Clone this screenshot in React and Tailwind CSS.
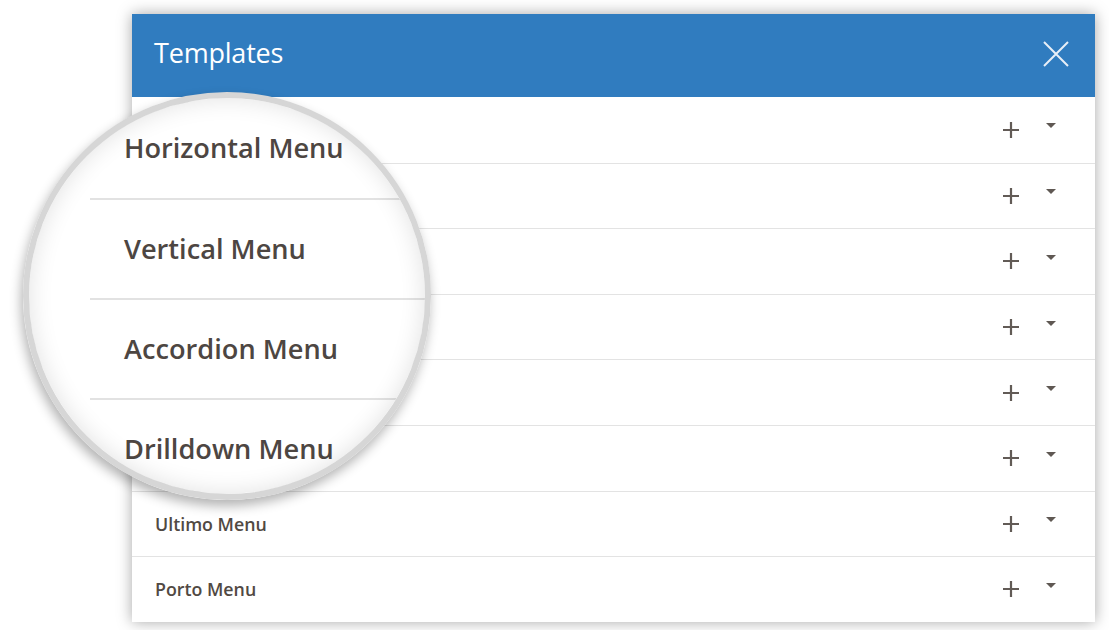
import React from 'react';

// labels of rows covered by the lens are not visible in the shot
const rows = ['', '', '', '', '', '', 'Ultimo Menu', 'Porto Menu'];

const zoomed = ['Horizontal Menu', 'Vertical Menu', 'Accordion Menu', 'Drilldown Menu'];

const PlusIcon = () => (
  <svg width="18" height="18" viewBox="0 0 18 18">
    <path d="M9 1v16M1 9h16" stroke="#625b56" strokeWidth="2.2" />
  </svg>
);

const Caret = () => (
  <svg width="10" height="5" viewBox="0 0 10 5" className="mb-2">
    <path d="M0 0h10L5 5z" fill="#5f5853" />
  </svg>
);

const App = () => {
  return (
    <div
      className="relative w-[1109px] h-[630px] bg-white overflow-hidden"
      style={{ fontFamily: '"Open Sans", sans-serif' }}
    >
      <div className="ml-[132px] mt-[14px] w-[963px] bg-white shadow-[0_0_14px_rgba(0,0,0,0.35)]">
        <div className="h-[83px] bg-[#307cbf] flex items-center justify-between pl-[22px] pr-[26px]">
          <h1 className="text-white text-[27px] font-normal tracking-[-0.2px] mb-[4px]">Templates</h1>
          <svg width="26" height="26" viewBox="0 0 26 26" className="mb-[3px]">
            <path d="M1 1l24 24M25 1L1 25" stroke="#e8eff7" strokeWidth="2" />
          </svg>
        </div>
        {rows.map((name, i) => (
          <div
            key={i}
            className={`h-[65.6px] flex items-center justify-between pl-[23px] pr-[39px] ${
              i > 0 ? 'border-t border-[#e3e3e3]' : ''
            }`}
          >
            <span className="text-[17.8px] font-semibold text-[#514943]">{name}</span>
            <div className="flex items-center gap-[26px]">
              <PlusIcon />
              <Caret />
            </div>
          </div>
        ))}
      </div>

      {/* magnifier lens */}
      <div className="absolute left-[23px] top-[92px] w-[408px] h-[408px] rounded-full shadow-[-2px_6px_12px_rgba(0,0,0,0.3)]">
        <div className="w-full h-full rounded-full border-[6px] border-[#d6d6d6] overflow-hidden relative bg-white">
          <div className="absolute left-[61px] top-[0px] w-[400px]">
            {zoomed.map((name, i) => (
              <div
                key={name}
                className={`h-[100px] flex items-center pl-[34px] ${
                  i > 0 ? 'border-t-2 border-[#e2e2e2]' : ''
                }`}
              >
                <span className="text-[27.2px] font-semibold text-[#4d4642]">{name}</span>
              </div>
            ))}
          </div>
          <div className="absolute inset-0 rounded-full shadow-[inset_0_0_24px_rgba(0,0,0,0.12)]" />
        </div>
      </div>
    </div>
  );
};

export default App;
